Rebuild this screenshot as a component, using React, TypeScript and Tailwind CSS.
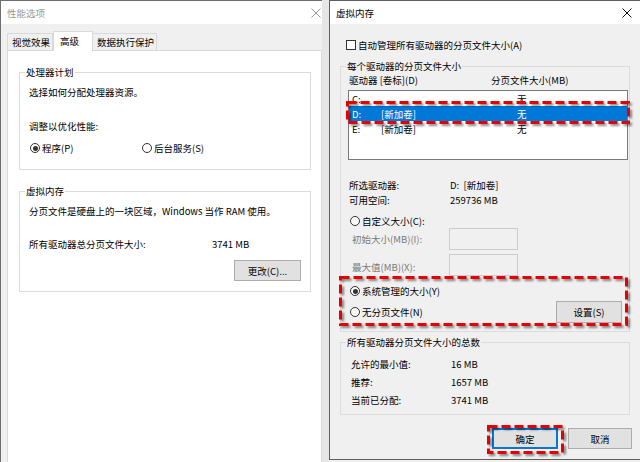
import React from "react";

function XIcon({ color }: { color: string }) {
  return (
    <svg width="10" height="10" viewBox="0 0 10 10">
      <path d="M0.5 0.5 L9.5 9.5 M9.5 0.5 L0.5 9.5" stroke={color} strokeWidth="1" fill="none" />
    </svg>
  );
}

function Radio({ checked }: { checked?: boolean }) {
  return (
    <span className="w-[10px] h-[10px] rounded-full border border-[#333333] bg-white flex items-center justify-center shrink-0">
      {checked && <span className="w-[5px] h-[5px] rounded-full bg-[#333333]" />}
    </span>
  );
}

function Dashed({ className, w, h }: { className: string; w: number; h: number }) {
  return (
    <svg
      width={w}
      height={h}
      className={"absolute overflow-visible drop-shadow-[2px_2px_1px_rgba(0,0,0,0.45)] " + className}
    >
      <rect
        x="1.5"
        y="1.5"
        width={w - 3}
        height={h - 3}
        fill="none"
        stroke="#e60000"
        strokeWidth="3"
        strokeDasharray="9 4"
      />
    </svg>
  );
}

function LeftDialog() {
  return (
    <div className="w-[322px] h-[462px] bg-[#f0f0f0] border-l border-t border-[#6e6e6e] flex flex-col shrink-0">
      <div className="h-[23px] bg-white flex items-center justify-between pl-[6px] pr-[1px] text-[#9a9a9a]">
        <span>性能选项</span>
        <XIcon color="#9a9a9a" />
      </div>
      <div className="mt-[7px] ml-[6px] h-[20px] flex items-end relative z-10 -mb-px">
        <div className="w-[46px] h-[17px] mb-px border border-b-0 border-[#d9d9d9] bg-[#f0f0f0] flex items-center pl-[4px]">
          视觉效果
        </div>
        <div className="w-[40px] h-[20px] border border-b-0 border-[#d9d9d9] bg-white flex items-center pl-[6px] pb-[2px]">
          高级
        </div>
        <div className="w-[64px] h-[17px] mb-px border border-b-0 border-l-0 border-[#d9d9d9] bg-[#f0f0f0] flex items-center pl-[4px]">
          数据执行保护
        </div>
      </div>
      <div className="ml-[6px] w-[315px] flex-1 bg-white border border-b-0 border-[#d9d9d9] flex flex-col">
        <div className="relative mt-[21px] ml-[11px] w-[292px] border border-[#dcdcdc] pt-[11px] pb-[13px] pl-[9px] flex flex-col">
          <span className="absolute top-[-9px] left-[5px] px-[1px] bg-white leading-[16px]">处理器计划</span>
          <div className="h-[16px] flex items-center">选择如何分配处理器资源。</div>
          <div className="h-[16px] mt-[18px] flex items-center">调整以优化性能:</div>
          <div className="h-[16px] mt-[6px] flex items-center pl-[1px]">
            <div className="w-[112px] flex items-center gap-[2px]">
              <Radio checked />
              <span>程序(P)</span>
            </div>
            <div className="flex items-center gap-[2px]">
              <Radio />
              <span>后台服务(S)</span>
            </div>
          </div>
        </div>
        <div className="relative mt-[21px] ml-[11px] w-[292px] border border-[#dcdcdc] pt-[11px] pb-[10px] pl-[9px] pr-[9px] flex flex-col">
          <span className="absolute top-[-9px] left-[5px] px-[1px] bg-white leading-[16px]">虚拟内存</span>
          <div className="h-[16px] flex items-center">分页文件是硬盘上的一块区域，Windows 当作 RAM 使用。</div>
          <div className="h-[16px] mt-[17px] flex items-center">
            <span className="w-[183px]">所有驱动器总分页文件大小:</span>
            <span>3741 MB</span>
          </div>
          <div className="mt-[8px] flex justify-end">
            <div className="w-[67px] h-[21px] bg-[#e1e1e1] border border-[#adadad] flex items-center justify-center">
              更改(C)...
            </div>
          </div>
        </div>
      </div>
    </div>
  );
}

function RightDialog() {
  return (
    <div className="relative w-[311px] h-[460px] bg-[#f0f0f0] border-l border-b border-t border-[#5f5f5f] flex flex-col shrink-0">
      <div className="h-[23px] bg-white flex items-center justify-between pl-[6px] pr-[8px]">
        <span>虚拟内存</span>
        <XIcon color="#111111" />
      </div>
      <div className="flex flex-col pl-[10px] pr-[10px]">
        <div className="mt-[13px] h-[16px] flex items-center pl-[6px] gap-[2px]">
          <span className="w-[10px] h-[10px] border border-[#333333] bg-white shrink-0" />
          <span>自动管理所有驱动器的分页文件大小(A)</span>
        </div>
        <div className="relative mt-[13px] border border-[#dcdcdc] pt-[5px] pb-[8px] flex flex-col">
          <span className="absolute top-[-9px] left-[5px] px-[1px] bg-[#f0f0f0] leading-[16px]">每个驱动器的分页文件大小</span>
          <div className="h-[16px] flex items-center pl-[8px]">
            <span className="w-[142px]">驱动器 [卷标](D)</span>
            <span>分页文件大小(MB)</span>
          </div>
          <div className="mt-[2px] ml-[7px] mr-px h-[70px] bg-white border border-[#7a7a7a] flex flex-col">
            <div className="h-[15px] flex items-center pl-[3px]">
              <span className="w-[29px]">C:</span>
              <span className="w-[136px]"></span>
              <span>无</span>
            </div>
            <div className="h-[15px] flex items-center pl-[3px] bg-[#0078d7] text-white">
              <span className="w-[29px]">D:</span>
              <span className="w-[136px]">[新加卷]</span>
              <span>无</span>
            </div>
            <div className="h-[15px] flex items-center pl-[3px]">
              <span className="w-[29px]">E:</span>
              <span className="w-[136px]">[新加卷]</span>
              <span>无</span>
            </div>
          </div>
          <div className="mt-[17px] h-[15px] flex items-center pl-[8px]">
            <span className="w-[101px]">所选驱动器:</span>
            <span>D:&nbsp;&nbsp;[新加卷]</span>
          </div>
          <div className="h-[15px] flex items-center pl-[8px]">
            <span className="w-[101px]">可用空间:</span>
            <span>259736 MB</span>
          </div>
          <div className="mt-[7px] h-[14px] flex items-center pl-[9px] gap-[2px]">
            <Radio />
            <span>自定义大小(C):</span>
          </div>
          <div className="h-[22px] flex items-center pl-[11px]">
            <span className="w-[97px] text-[#7a7a7a]">初始大小(MB)(I):</span>
            <span className="w-[69px] h-[22px] border border-[#cccccc] bg-[#f0f0f0]" />
          </div>
          <div className="mt-[4px] h-[22px] flex items-center pl-[11px]">
            <span className="w-[97px] text-[#7a7a7a] pt-[3px]">最大值(MB)(X):</span>
            <span className="w-[69px] h-[22px] border border-[#cccccc] bg-[#f0f0f0]" />
          </div>
          <div className="mt-[8px] h-[14px] flex items-center pl-[9px] gap-[2px]">
            <Radio checked />
            <span>系统管理的大小(Y)</span>
          </div>
          <div className="mt-[3px] h-[22px] flex items-center justify-between pl-[9px] pr-[7px]">
            <div className="flex items-center gap-[2px]">
              <Radio />
              <span>无分页文件(N)</span>
            </div>
            <div className="w-[66px] h-[22px] bg-[#e1e1e1] border border-[#adadad] flex items-center justify-center">
              设置(S)
            </div>
          </div>
        </div>
        <div className="relative mt-[10px] border border-[#dcdcdc] pt-[12px] pb-[5px] flex flex-col">
          <span className="absolute top-[-9px] left-[5px] px-[1px] bg-[#f0f0f0] leading-[16px]">所有驱动器分页文件大小的总数</span>
          <div className="h-[18px] flex items-center pl-[10px]">
            <span className="w-[100px]">允许的最小值:</span>
            <span>16 MB</span>
          </div>
          <div className="h-[18px] flex items-center pl-[10px]">
            <span className="w-[100px]">推荐:</span>
            <span>1657 MB</span>
          </div>
          <div className="h-[18px] flex items-center pl-[10px]">
            <span className="w-[100px]">当前已分配:</span>
            <span>3741 MB</span>
          </div>
        </div>
        <div className="mt-[13px] h-[21px] flex justify-end gap-[10px] -mr-[2px]">
          <div className="w-[66px] h-[21px] bg-[#e1e1e1] border border-[#0078d7] shadow-[inset_0_0_0_1px_#0078d7] flex items-center justify-center">
            确定
          </div>
          <div className="w-[64px] h-[21px] bg-[#e1e1e1] border border-[#adadad] flex items-center justify-center">
            取消
          </div>
        </div>
      </div>
      <Dashed className="left-[16px] top-[100px]" w={284} h={23} />
      <Dashed className="left-[9px] top-[275px]" w={289} h={50} />
      <Dashed className="left-[157px] top-[424px]" w={77} h={29} />
    </div>
  );
}

export default function App() {
  return (
    <div className="w-[640px] h-[462px] overflow-hidden bg-[#f0f0f0] flex text-[9.5px] leading-[16px] text-black font-['Noto_Sans_CJK_SC','Noto_Sans',sans-serif]">
      <LeftDialog />
      <div className="w-[7px] h-[462px] bg-[#e6e6e6] shrink-0" />
      <RightDialog />
    </div>
  );
}
